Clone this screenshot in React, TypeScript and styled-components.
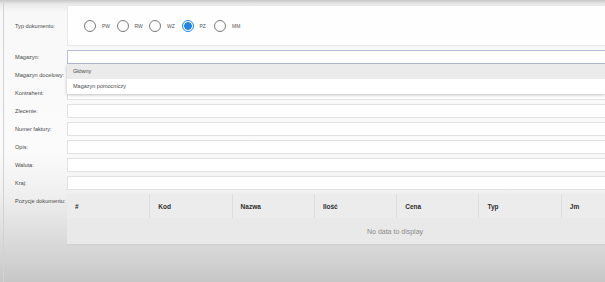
import React from "react";
import styled, { createGlobalStyle } from "styled-components";

const Global = createGlobalStyle`
  html, body { margin: 0; padding: 0; }
  body {
    width: 605px;
    height: 282px;
    overflow: hidden;
    font-family: "Liberation Sans", Arial, sans-serif;
    background: linear-gradient(to bottom, #c6c6c6 0px, #e9e9e9 4px, #f8f8f8 12px, #fbfbfb 150px, #f1f1f1 190px, #e4e4e4 220px, #d4d4d4 255px, #c7c7c7 282px);
  }
`;

const Page = styled.div`
  height: 282px;
  border-left: 1px solid #d2d2d2;
  margin-left: 3px;
  box-sizing: border-box;
  padding-top: 5px;
`;

const Form = styled.div`
  display: grid;
  grid-template-columns: 63px 1fr;
  row-gap: 4px;
`;

const Label = styled.div`
  font-size: 5.6px;
  color: #4a4a4a;
  padding-left: 11px;
  display: flex;
  align-items: center;
  white-space: nowrap;
  overflow: visible;
`;

const TopLabel = styled(Label)`
  align-items: flex-start;
  padding-top: 4px;
`;

const RadioBox = styled.div`
  height: 41px;
  box-sizing: border-box;
  background: #fefefe;
  border: 1px solid #e8e8e8;
  border-right: none;
  display: flex;
  align-items: center;
  padding-left: 16px;
`;

const RadioItem = styled.div`
  display: flex;
  align-items: center;
  width: 32.5px;
  flex: none;
`;

const Circle = styled.span<{ $on?: boolean }>`
  width: 12px;
  height: 12px;
  box-sizing: border-box;
  border-radius: 50%;
  border: 1.5px solid ${(p) => (p.$on ? "#1e86e8" : "#7a7a7a")};
  background: ${(p) => (p.$on ? "radial-gradient(circle, #1e86e8 0 3.6px, #fff 4px)" : "#fff")};
  flex: none;
`;

const RadioText = styled.span`
  font-size: 5px;
  color: #555;
  margin-left: 6px;
`;

const FieldWrap = styled.div`
  position: relative;
`;

const Input = styled.div<{ $focus?: boolean }>`
  height: 14px;
  box-sizing: border-box;
  background: #fff;
  border: 1px solid ${(p) => (p.$focus ? "#b9bdd9" : "#e2e2e2")};
  border-right: none;
`;

const Dropdown = styled.div`
  position: absolute;
  left: 0;
  right: 0;
  top: 14px;
  background: #fff;
  box-shadow: 0 1px 3px rgba(0, 0, 0, 0.25);
  z-index: 5;
  padding: 0 0 1px;
`;

const Option = styled.div<{ $active?: boolean }>`
  height: 14.5px;
  display: flex;
  align-items: center;
  padding-left: 6px;
  font-size: 5.5px;
  color: #4a4a4a;
  background: ${(p) => (p.$active ? "#ebebeb" : "#fff")};
`;

const Grid = styled.div`
  overflow: hidden;
`;

const HeaderRow = styled.div`
  display: flex;
  height: 24px;
  background: #ececec;
`;

const HeadCell = styled.div<{ $first?: boolean }>`
  width: 82.3px;
  flex: none;
  box-sizing: border-box;
  border-left: ${(p) => (p.$first ? "none" : "1px solid #dedede")};
  display: flex;
  align-items: center;
  padding-left: 8px;
  font-size: 6.5px;
  font-weight: bold;
  color: #2e2e2e;
`;

const EmptyRow = styled.div`
  height: 26px;
  background: #e9e9e9;
  border-bottom: 2px solid #d3d3d3;
  display: flex;
  align-items: center;
  padding-left: 300px;
  font-size: 7px;
  color: #8a8a8a;
`;

const columns = ["#", "Kod", "Nazwa", "Ilość", "Cena", "Typ", "Jm"];
const radios = ["PW", "RW", "WZ", "PZ", "MM"];
const fields = ["Zlecenie:", "Numer faktury:", "Opis:", "Waluta:", "Kraj:"];

export default function App() {
  return (
    <>
      <Global />
      <Page>
        <Form>
          <Label>Typ dokumentu:</Label>
          <RadioBox>
            {radios.map((r) => (
              <RadioItem key={r}>
                <Circle $on={r === "PZ"} />
                <RadioText>{r}</RadioText>
              </RadioItem>
            ))}
          </RadioBox>

          <Label>Magazyn:</Label>
          <FieldWrap>
            <Input $focus />
            <Dropdown>
              <Option $active>Główny</Option>
              <Option>Magazyn pomocniczy</Option>
            </Dropdown>
          </FieldWrap>

          <Label>Magazyn docelowy:</Label>
          <Input />

          <Label>Kontrahent:</Label>
          <Input />

          {fields.map((f) => (
            <React.Fragment key={f}>
              <Label>{f}</Label>
              <Input />
            </React.Fragment>
          ))}

          <TopLabel>Pozycje dokumentu:</TopLabel>
          <Grid>
            <HeaderRow>
              {columns.map((c, i) => (
                <HeadCell key={c} $first={i === 0}>
                  {c}
                </HeadCell>
              ))}
            </HeaderRow>
            <EmptyRow>No data to display</EmptyRow>
          </Grid>
        </Form>
      </Page>
    </>
  );
}
